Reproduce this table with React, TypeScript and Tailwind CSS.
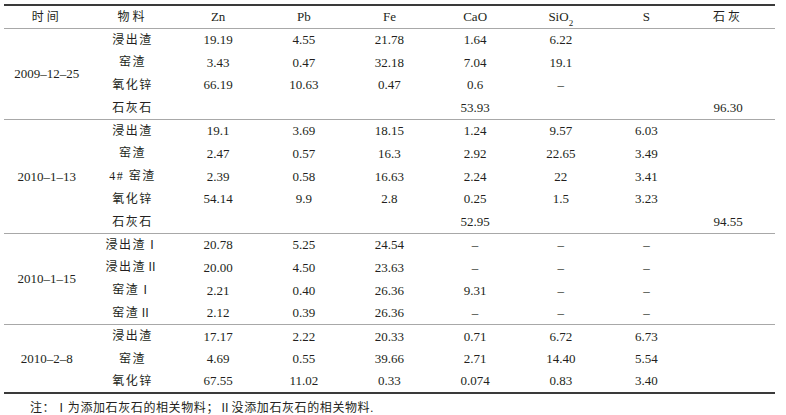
import React from "react";

type Row = { m: string; v: string[] };
type Section = { date: string; rows: Row[] };

const sections: Section[] = [
  {
    date: "2009–12–25",
    rows: [
      { m: "浸出渣", v: ["19.19", "4.55", "21.78", "1.64", "6.22", "", ""] },
      { m: "窑渣", v: ["3.43", "0.47", "32.18", "7.04", "19.1", "", ""] },
      { m: "氧化锌", v: ["66.19", "10.63", "0.47", "0.6", "–", "", ""] },
      { m: "石灰石", v: ["", "", "", "53.93", "", "", "96.30"] },
    ],
  },
  {
    date: "2010–1–13",
    rows: [
      { m: "浸出渣", v: ["19.1", "3.69", "18.15", "1.24", "9.57", "6.03", ""] },
      { m: "窑渣", v: ["2.47", "0.57", "16.3", "2.92", "22.65", "3.49", ""] },
      { m: "4# 窑渣", v: ["2.39", "0.58", "16.63", "2.24", "22", "3.41", ""] },
      { m: "氧化锌", v: ["54.14", "9.9", "2.8", "0.25", "1.5", "3.23", ""] },
      { m: "石灰石", v: ["", "", "", "52.95", "", "", "94.55"] },
    ],
  },
  {
    date: "2010–1–15",
    rows: [
      { m: "浸出渣Ⅰ", v: ["20.78", "5.25", "24.54", "–", "–", "–", ""] },
      { m: "浸出渣Ⅱ", v: ["20.00", "4.50", "23.63", "–", "–", "–", ""] },
      { m: "窑渣Ⅰ", v: ["2.21", "0.40", "26.36", "9.31", "–", "–", ""] },
      { m: "窑渣Ⅱ", v: ["2.12", "0.39", "26.36", "–", "–", "–", ""] },
    ],
  },
  {
    date: "2010–2–8",
    rows: [
      { m: "浸出渣", v: ["17.17", "2.22", "20.33", "0.71", "6.72", "6.73", ""] },
      { m: "窑渣", v: ["4.69", "0.55", "39.66", "2.71", "14.40", "5.54", ""] },
      { m: "氧化锌", v: ["67.55", "11.02", "0.33", "0.074", "0.83", "3.40", ""] },
    ],
  },
];

const FONT = { fontFamily: '"Liberation Serif", "Noto Sans CJK SC", serif' };

export default function App() {
  return (
    <div className="w-[786px] h-[415px] bg-white text-[#231f20]" style={FONT}>
      <div className="pt-[4px] pl-[4px]">
        <table className="w-[771px] table-fixed border-collapse text-[13px] leading-none">
          <thead>
            <tr className="h-[23px] border-t-2 border-t-[#3a3a3a] border-b border-b-[#a8a8a8]">
              <th className="font-normal text-center text-[12px] tracking-[3px]">时间</th>
              <th className="font-normal text-center text-[12px] tracking-[3px]">物料</th>
              <th className="font-normal text-center">Zn</th>
              <th className="font-normal text-center">Pb</th>
              <th className="font-normal text-center">Fe</th>
              <th className="font-normal text-center">CaO</th>
              <th className="font-normal text-center">
                SiO<sub className="text-[9px] align-[-2px]">2</sub>
              </th>
              <th className="font-normal text-center">S</th>
              <th className="font-normal text-center text-[12px] tracking-[3px] pr-[8px]">石灰</th>
            </tr>
          </thead>
          {sections.map((s, si) => (
            <tbody
              key={si}
              className={
                si === sections.length - 1
                  ? "border-b-2 border-b-[#3a3a3a]"
                  : "border-b border-b-[#a8a8a8]"
              }
            >
              {s.rows.map((r, ri) => (
                <tr key={ri} className="h-[22.8px]">
                  {ri === 0 && (
                    <td rowSpan={s.rows.length} className="text-center align-middle">
                      {s.date}
                    </td>
                  )}
                  <td className="text-center text-[12px] tracking-[1.5px]">{r.m}</td>
                  {r.v.map((x, xi) => (
                    <td key={xi} className={"text-center" + (xi === 6 ? " pr-[8px]" : "")}>
                      {x}
                    </td>
                  ))}
                </tr>
              ))}
            </tbody>
          ))}
        </table>
        <div className="pl-[26px] pt-[8px] text-[12px] tracking-[0.6px] leading-none">
          注：Ⅰ为添加石灰石的相关物料；Ⅱ没添加石灰石的相关物料.
        </div>
      </div>
    </div>
  );
}
